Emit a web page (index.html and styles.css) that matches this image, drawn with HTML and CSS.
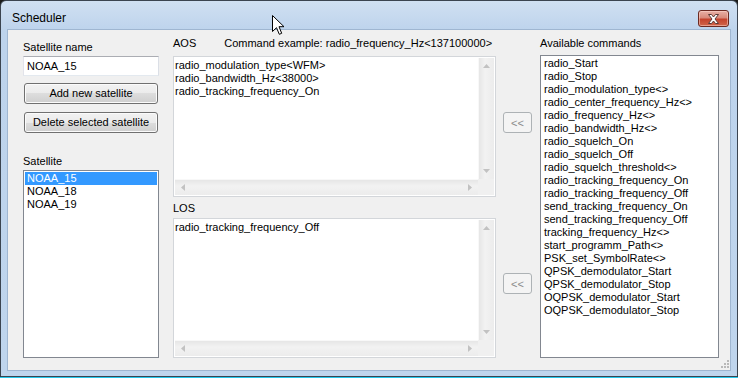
FILE: index.html
```html
<!DOCTYPE html>
<html lang="en">
<head>
    <meta charset="UTF-8">
    <title>Scheduler</title>
    <link rel="stylesheet" href="styles.css">
</head>
<body>
    <div class="window">
        <!-- Title bar -->
        <div class="titlebar">
            <span class="title">Scheduler</span>
            <button class="close-btn">
                <svg width="13" height="10" viewBox="0 0 13 10">
                    <path d="M1.5,0.5 L4.5,0.5 L6.5,3 L8.5,0.5 L11.5,0.5 L8,5 L11.5,9.5 L8.5,9.5 L6.5,7 L4.5,9.5 L1.5,9.5 L5,5 Z" fill="#ffffff" stroke="#5a3a36" stroke-width="1"/>
                </svg>
            </button>
        </div>

        <!-- Client area -->
        <div class="client">
            <div class="col-left">
                <div class="label">Satellite name</div>
                <div class="textbox">NOAA_15</div>
                <button class="btn btn-add">Add new satellite</button>
                <button class="btn btn-delete">Delete selected satellite</button>
                <div class="label label-sat">Satellite</div>
                <ul class="listbox list-sat">
                    <li class="selected">NOAA_15</li>
                    <li>NOAA_18</li>
                    <li>NOAA_19</li>
                </ul>
            </div>

            <div class="col-mid">
                <div class="label label-row">
                    <span>AOS</span>
                    <span class="example">Command example: radio_frequency_Hz&lt;137100000&gt;</span>
                </div>
                <div class="memo">
                    <div class="memo-text">radio_modulation_type&lt;WFM&gt;<br>radio_bandwidth_Hz&lt;38000&gt;<br>radio_tracking_frequency_On</div>
                    <div class="vscroll">
                        <svg width="7" height="4" viewBox="0 0 7 4"><path d="M0,4 L3.5,0 L7,4 Z" fill="#c2c2c2"/></svg>
                        <svg width="7" height="4" viewBox="0 0 7 4"><path d="M0,0 L3.5,4 L7,0 Z" fill="#c2c2c2"/></svg>
                    </div>
                    <div class="hscroll">
                        <svg width="4" height="7" viewBox="0 0 4 7"><path d="M4,0 L0,3.5 L4,7 Z" fill="#c2c2c2"/></svg>
                        <svg width="4" height="7" viewBox="0 0 4 7"><path d="M0,0 L4,3.5 L0,7 Z" fill="#c2c2c2"/></svg>
                    </div>
                    <div class="corner"></div>
                </div>

                <div class="label label-los">LOS</div>
                <div class="memo memo-los">
                    <div class="memo-text">radio_tracking_frequency_Off</div>
                    <div class="vscroll">
                        <svg width="7" height="4" viewBox="0 0 7 4"><path d="M0,4 L3.5,0 L7,4 Z" fill="#c2c2c2"/></svg>
                        <svg width="7" height="4" viewBox="0 0 7 4"><path d="M0,0 L3.5,4 L7,0 Z" fill="#c2c2c2"/></svg>
                    </div>
                    <div class="hscroll">
                        <svg width="4" height="7" viewBox="0 0 4 7"><path d="M4,0 L0,3.5 L4,7 Z" fill="#c2c2c2"/></svg>
                        <svg width="4" height="7" viewBox="0 0 4 7"><path d="M0,0 L4,3.5 L0,7 Z" fill="#c2c2c2"/></svg>
                    </div>
                    <div class="corner"></div>
                </div>
            </div>

            <div class="col-arrows">
                <button class="btn-move" disabled>&lt;&lt;</button>
                <button class="btn-move btn-move-los" disabled>&lt;&lt;</button>
            </div>

            <div class="col-right">
                <div class="label">Available commands</div>
                <ul class="listbox list-commands">
                    <li>radio_Start</li>
                    <li>radio_Stop</li>
                    <li>radio_modulation_type&lt;&gt;</li>
                    <li>radio_center_frequency_Hz&lt;&gt;</li>
                    <li>radio_frequency_Hz&lt;&gt;</li>
                    <li>radio_bandwidth_Hz&lt;&gt;</li>
                    <li>radio_squelch_On</li>
                    <li>radio_squelch_Off</li>
                    <li>radio_squelch_threshold&lt;&gt;</li>
                    <li>radio_tracking_frequency_On</li>
                    <li>radio_tracking_frequency_Off</li>
                    <li>send_tracking_frequency_On</li>
                    <li>send_tracking_frequency_Off</li>
                    <li>tracking_frequency_Hz&lt;&gt;</li>
                    <li>start_programm_Path&lt;&gt;</li>
                    <li>PSK_set_SymbolRate&lt;&gt;</li>
                    <li>QPSK_demodulator_Start</li>
                    <li>QPSK_demodulator_Stop</li>
                    <li>OQPSK_demodulator_Start</li>
                    <li>OQPSK_demodulator_Stop</li>
                </ul>
            </div>

            <!-- size grip -->
            <svg class="grip" width="11" height="11" viewBox="0 0 11 11">
                <g fill="#b8b8b8">
                    <rect x="8" y="1" width="2" height="2"/>
                    <rect x="5" y="4" width="2" height="2"/>
                    <rect x="8" y="4" width="2" height="2"/>
                    <rect x="2" y="7" width="2" height="2"/>
                    <rect x="5" y="7" width="2" height="2"/>
                    <rect x="8" y="7" width="2" height="2"/>
                </g>
            </svg>
        </div>

        <!-- mouse pointer -->
        <svg class="cursor" width="13" height="21" viewBox="0 0 13 21">
            <path d="M0.5,0.5 L0.5,16.5 L4.5,12.7 L7.3,19.3 L9.7,18.3 L7,11.7 L12,11.7 Z" fill="#ffffff" stroke="#000000" stroke-width="1" stroke-linejoin="miter"/>
        </svg>
    </div>
</body>
</html>
```

FILE: styles.css
```css
html, body {
    margin: 0;
    padding: 0;
}

body {
    width: 738px;
    height: 378px;
    overflow: hidden;
    background: linear-gradient(to bottom, #1b1b1b 377px, #25c8ec 377px);
    font-family: "Liberation Sans", Arial, sans-serif;
    font-size: 11px;
    color: #000000;
}

.window {
    position: relative;
    box-sizing: border-box;
    width: 738px;
    height: 377px;
    border: 1px solid #3b4450;
    border-radius: 6px 6px 0 0;
    padding: 0 6px 5px 6px;
    background: linear-gradient(to bottom, #d0e0f2 0px, #bdd3ec 30px, #bfd5ed 100%);
}

/* Title bar */
.titlebar {
    display: flex;
    justify-content: space-between;
    align-items: flex-start;
    height: 28px;
}

.title {
    margin-top: 10px;
    margin-left: 5px;
    font-size: 12px;
    line-height: 15px;
    color: #000000;
}

.close-btn {
    display: flex;
    justify-content: center;
    align-items: center;
    box-sizing: border-box;
    width: 31px;
    height: 17px;
    margin-top: 9px;
    margin-right: 2px;
    padding: 0;
    border: 1px solid #6b2a22;
    border-radius: 3px;
    background: linear-gradient(to bottom, #e8b0a6 0%, #d88a7b 45%, #c4432d 55%, #d0654a 100%);
    box-shadow: inset 0 0 0 1px rgba(255, 220, 210, 0.5);
}

/* Client area */
.client {
    position: relative;
    display: flex;
    align-items: flex-start;
    box-sizing: border-box;
    height: 342px;
    padding-left: 15px;
    border: 1px solid #9fb6d1;
    background-color: #f0f0f0;
}

.label {
    line-height: 13px;
    white-space: nowrap;
}

/* Left column */
.col-left {
    width: 136px;
    padding-top: 11px;
}

.textbox {
    box-sizing: border-box;
    height: 20px;
    margin-top: 2px;
    padding: 3px 2px 0 3px;
    line-height: 13px;
    border: 1px solid;
    border-color: #abadb3 #dbdfe6 #e3e9ef #e2e3ea;
    background-color: #ffffff;
}

.btn {
    display: block;
    box-sizing: border-box;
    width: 134px;
    height: 21px;
    margin-left: 1px;
    padding: 0;
    border: 1px solid #707070;
    border-radius: 3px;
    background: linear-gradient(to bottom, #f2f2f2 0%, #ebebeb 50%, #dddddd 50%, #cfcfcf 100%);
    box-shadow: inset 0 0 0 1px #fbfbfb;
    font-family: "Liberation Sans", Arial, sans-serif;
    font-size: 11px;
    line-height: 13px;
    color: #000000;
}

.btn-add {
    margin-top: 7px;
}

.btn-delete {
    margin-top: 8px;
}

.label-sat {
    margin-top: 22px;
}

.listbox {
    box-sizing: border-box;
    margin: 0;
    padding: 1px;
    list-style: none;
    border: 1px solid #828790;
    background-color: #ffffff;
}

.listbox li {
    height: 13px;
    padding-left: 2px;
    line-height: 13px;
    white-space: nowrap;
}

.listbox li.selected {
    background-color: #3399ff;
    color: #ffffff;
}

.list-sat {
    height: 188px;
    margin-top: 2px;
}

/* Middle column */
.col-mid {
    width: 323px;
    margin-left: 14px;
    padding-top: 7px;
}

.label-row {
    display: flex;
    gap: 28px;
}

.memo {
    display: grid;
    grid-template-columns: 1fr 16px;
    grid-template-rows: 1fr 16px;
    box-sizing: border-box;
    height: 141px;
    margin-top: 6px;
    padding: 1px;
    border: 1px solid #d3d6da;
    background-color: #ffffff;
}

.memo-los {
    height: 140px;
    margin-top: 3px;
}

.memo-text {
    padding: 1px 0 0 0;
    line-height: 13px;
    white-space: nowrap;
    overflow: hidden;
}

.vscroll {
    display: flex;
    flex-direction: column;
    justify-content: space-between;
    align-items: center;
    padding: 6px 0;
    background: linear-gradient(to right, #e6e6e6, #f2f2f2 40%, #ececec);
    border-left: 1px solid #f8f8f8;
}

.hscroll {
    display: flex;
    justify-content: space-between;
    align-items: center;
    padding: 0 6px;
    background: linear-gradient(to bottom, #e6e6e6, #f2f2f2 40%, #ececec);
    border-top: 1px solid #f8f8f8;
}

.corner {
    background-color: #f0f0f0;
}

.label-los {
    margin-top: 5px;
}

/* Move buttons */
.col-arrows {
    display: flex;
    flex-direction: column;
    width: 29px;
    margin-left: 7px;
    padding-top: 82px;
}

.btn-move {
    box-sizing: border-box;
    height: 21px;
    padding: 0;
    border: 1px solid #adb2b5;
    border-radius: 3px;
    background-color: #f4f4f4;
    font-family: "Liberation Sans", Arial, sans-serif;
    font-size: 11px;
    color: #8c8c8c;
}

.btn-move-los {
    margin-top: 140px;
}

/* Right column */
.col-right {
    width: 179px;
    margin-left: 8px;
    padding-top: 7px;
}

.list-commands {
    height: 303px;
    margin-top: 5px;
}

.grip {
    position: absolute;
    right: 0;
    bottom: 0;
}

.cursor {
    position: absolute;
    left: 271px;
    top: 14px;
}
```
